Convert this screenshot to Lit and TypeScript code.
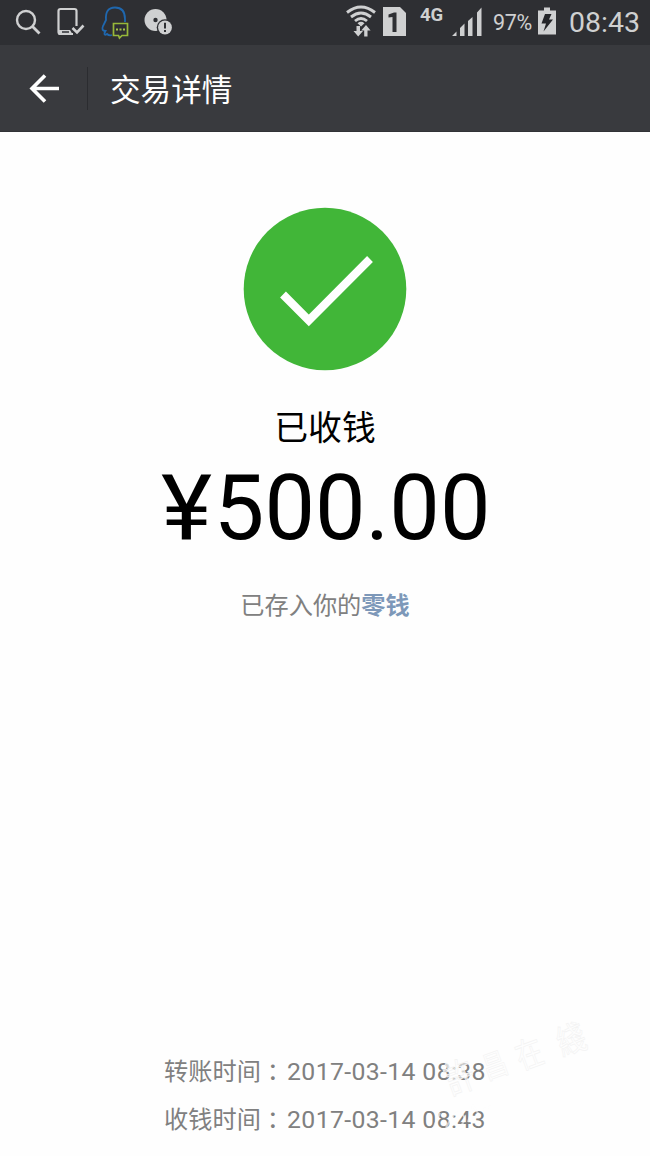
import { LitElement, html, css } from "lit";
import { customElement, property } from "lit/decorators.js";

@customElement("status-bar")
class StatusBar extends LitElement {
  static styles = css`
    :host { display: block; height: 45px; background: #2e2f33; }
    .bar {
      display: flex; height: 45px; justify-content: space-between;
      font-family: Roboto, sans-serif; color: #cfd0d1; white-space: nowrap;
    }
    svg { display: block; flex: none; }
    .right { display: flex; }
    .pct { width: 44px; font-size: 21.5px; line-height: 45px; letter-spacing: -0.3px; }
    .clock { width: 81px; font-size: 28.5px; line-height: 46px; }
    .net { width: 32px; font: bold 18.5px/30px Roboto, sans-serif; }
    .sim { width: 38px; }
  `;
  render() {
    return html`<div class="bar">
      <svg width="180" height="45" viewBox="0 0 180 45" fill="none">
        <circle cx="26" cy="20" r="9" stroke="#cfd0d1" stroke-width="2.4" />
        <path d="M32.5 26.5L39.5 33.5" stroke="#cfd0d1" stroke-width="2.8" />
        <path d="M76.500 26V11Q76.500 9 74.500 9H60.500Q58.500 9 58.500 11V32Q58.500 34 60.500 34H73" stroke="#cfd0d1" stroke-width="2.2" />
        <path d="M58 30H70L73 35H60Q58 35 58 33Z" fill="#cfd0d1" />
        <path d="M62 32H69" stroke="#2e2f33" stroke-width="1.5" />
        <path d="M72.500 28L77 32.500L83.500 25.500" stroke="#cfd0d1" stroke-width="2.6" />
        <path d="M112 35Q109 36 107 34Q104 36 104.500 33L105.500 31Q101 31 103 26L106 20Q105 7.500 115 7.500Q125 7.500 125 19V22" stroke="#1f67ae" stroke-width="1.8" />
        <path d="M113.500 23.500H127.500V35.500H122L119.500 38L118.500 35.500H113.500Z" stroke="#97b83a" stroke-width="1.7" fill="#2e2f33" />
        <path d="M116 29.500H118M119.500 29.500H121.500M123 29.500H125" stroke="#a4c447" stroke-width="2" />
        <circle cx="155.500" cy="20" r="11" fill="#cfd0d1" />
        <circle cx="155.500" cy="20" r="2.200" fill="#2e2f33" />
        <circle cx="165" cy="27.500" r="8.300" fill="#2e2f33" />
        <circle cx="165" cy="27.500" r="6.900" fill="#cfd0d1" />
        <path d="M165 22.800V28.500M165 30V32" stroke="#2e2f33" stroke-width="2" />
      </svg>
      <div class="right">
        <svg width="37" height="45" viewBox="345 0 37 45" fill="none" stroke="#cfd0d1" stroke-width="2.900">
          <path d="M347 12.500Q361 1.500 375 12.500" />
          <path d="M351 17Q361 9 371 17" />
          <path d="M355 21Q361 16 367 21" />
          <path d="M357.500 23.200Q361 20.500 364.500 23.200L361 26.500Z" fill="#cfd0d1" stroke="none" />
          <path d="M356.500 26H360V31H363L358.200 36.500L353.500 31H356.500ZM364.200 36.500V30.500H361.200L366 25L370.600 30.500H367.500V36.500Z" fill="#cfd0d1" stroke="none" />
        </svg>
        <svg class="sim" width="38" height="45" viewBox="382 0 38 45">
          <path d="M383 7H400L406 13V36H383Z" fill="#cfd0d1" />
          <path d="M388.500 17.500V14.500L394 12.500H396.500V32H392.500V17Z" fill="#2e2f33" />
        </svg>
        <span class="net">4G</span>
        <svg width="41" height="45" viewBox="452 0 41 45" fill="#cfd0d1">
          <path d="M452 36L456.500 31.500V36ZM460 28L464.500 23.500V36H460ZM468 21L472.500 17V36H468ZM477 12.500L481.500 7.500V36H477Z" />
        </svg>
        <span class="pct">97%</span>
        <svg width="32" height="45" viewBox="537 0 32 45">
          <path d="M538 10.500H544V7.500H550V10.500H556V34.500H538Z" fill="#cfd0d1" />
          <path d="M545 14H551.500L549 19.500H553L543.500 31.500L546 23.500H541.500Z" fill="#242529" />
        </svg>
        <span class="clock">08:43</span>
      </div>
    </div>`;
  }
}

@customElement("title-bar")
class TitleBar extends LitElement {
  @property() label = "";
  static styles = css`
    :host { display: block; }
    .bar { display: flex; align-items: center; height: 87px; background: #393a3e; box-sizing: border-box; border-bottom: 1px solid #313236; }
    .back { display: block; width: 87px; height: 86px; }
    .rule { width: 1px; height: 43px; background: #2b2c30; margin-right: 22px; }
    .title { font: 30.6px/44px "Noto Sans CJK SC", sans-serif; color: #fff; padding-bottom: 1px; }
  `;
  render() {
    return html`<div class="bar">
      <svg class="back" viewBox="0 45 87 86" fill="none" stroke="#fff" stroke-width="3.600">
        <path d="M45 75.500L32 88.500L45 101.500M32 88.500H59" />
      </svg>
      <div class="rule"></div>
      <div class="title">${this.label}</div>
    </div>`;
  }
}

@customElement("app-root")
class AppRoot extends LitElement {
  static styles = css`
    :host {
      display: flex; flex-direction: column; position: relative; height: 1156px;
      background: #fefefe; overflow: hidden;
      font-family: Roboto, "Noto Sans CJK SC", sans-serif;
    }
    main { flex: 1; display: flex; flex-direction: column; align-items: center; padding-top: 75px; white-space: nowrap; }
    .ok { display: block; width: 164px; height: 164px; }
    .state { margin-top: 30px; font: 33.8px/50px "Noto Sans CJK SC", sans-serif; color: #000; }
    .amount { display: flex; margin-top: 5px; padding-left: 3px; font-size: 90px; line-height: 106px; color: #000; }
    .yen { transform: scaleX(1.08); transform-origin: 50% 50%; margin-right: 4px; }
    .saved { margin-top: 24px; font: 24.2px/36px "Noto Sans CJK SC", sans-serif; color: #808080; }
    .link { font-weight: 700; color: #7d98b9; }
    .times { margin-top: auto; padding-bottom: 12px; color: #808080; }
    .row { display: flex; height: 48px; align-items: center; }
    .name { display: flex; width: 123px; font: 24.2px/36px "Noto Sans CJK SC", sans-serif; padding-bottom: 4px; }
    .colon { font-family: "Noto Sans CJK TC", sans-serif; margin: 1px 0 -1px 0; }
    .when { font-size: 24.8px; line-height: 36px; letter-spacing: 0.36px; }
    .mark { position: absolute; left: 410px; top: 990px; pointer-events: none; overflow: visible; }
    .glyph { font: 38px "Noto Sans CJK TC", sans-serif; fill: #fefefe; fill-opacity: 0.6; stroke: #f3f3f3; stroke-width: 0.8px; }
  `;
  row(name: string, when: string) {
    return html`<div class="row"><span class="name">${name}<span class="colon" lang="zh-TW">：</span></span><span class="when">${when}</span></div>`;
  }
  render() {
    return html`
      <status-bar></status-bar>
      <title-bar label="交易详情"></title-bar>
      <main>
        <svg class="ok" viewBox="243 207 164 164" fill="none">
          <circle cx="325" cy="289" r="81.300" fill="#41b638" />
          <path d="M283 294.500L308.800 320.500L370 259" stroke="#fff" stroke-width="8.200" stroke-linejoin="miter" />
        </svg>
        <div class="state">已收钱</div>
        <div class="amount"><span class="yen">¥</span><span>500.00</span></div>
        <div class="saved">已存入你的<span class="link">零钱</span></div>
        <div class="times">
          ${this.row("转账时间", "2017-03-14 08:38")}
          ${this.row("收钱时间", "2017-03-14 08:43")}
        </div>
      </main>
      <svg class="mark" width="220" height="150" viewBox="410 990 220 150">
        <g class="glyph">
          <text transform="translate(451 1095) rotate(-20) scale(.75 1)">許</text>
          <text transform="translate(487 1080) rotate(-20) scale(.65 .8)">昌</text>
          <text transform="translate(521 1070) rotate(-20) scale(.7 .9)">在</text>
          <text transform="translate(562 1056) rotate(-20) scale(.75 .9)">綫</text>
        </g>
        <path d="M432 1131L440 1113M446 1128Q455 1108 462 1114T456 1130M468 1122L473 1106L480 1116M482 1110L492 1106" fill="none" stroke="#fefefe" stroke-opacity="0.6" stroke-width="2" />
      </svg>`;
  }
}
